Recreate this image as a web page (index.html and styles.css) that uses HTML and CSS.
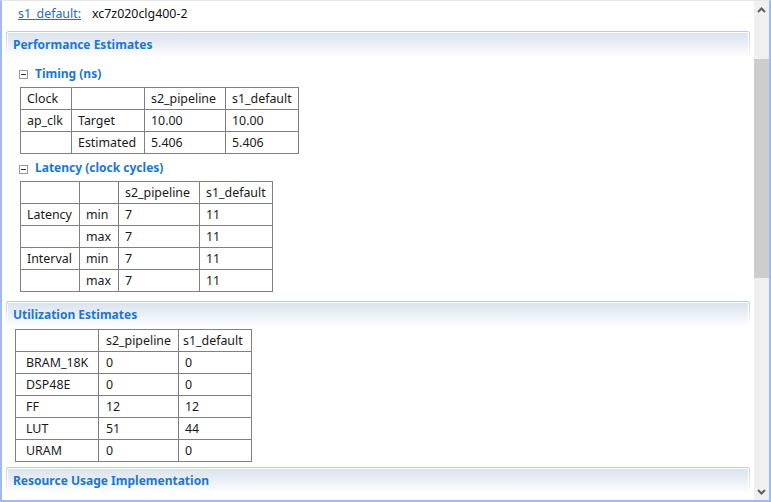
FILE: index.html
```html
<!DOCTYPE html>
<html>
<head>
<meta charset="utf-8">
<link rel="stylesheet" href="styles.css">
</head>
<body>
<div class="frame">
  <div class="content">
    <div class="part-row">
      <a class="link" href="#">s1_default:</a>
      <span class="part">xc7z020clg400-2</span>
    </div>

    <div class="section perf">
      <div class="section-head"><div class="section-head-inner">Performance Estimates</div></div>
      <div class="sub-head"><span class="toggle"></span><span class="sub-title">Timing (ns)</span></div>
      <table class="grid timing">
        <colgroup><col class="w51"><col class="w73"><col class="w81"><col class="w73"></colgroup>
        <tr><td>Clock</td><td></td><td>s2_pipeline</td><td>s1_default</td></tr>
        <tr><td>ap_clk</td><td>Target</td><td>10.00</td><td>10.00</td></tr>
        <tr><td></td><td>Estimated</td><td>5.406</td><td>5.406</td></tr>
      </table>
      <div class="sub-head short"><span class="toggle"></span><span class="sub-title">Latency (clock cycles)</span></div>
      <table class="grid latency">
        <colgroup><col class="w59"><col class="w39"><col class="w81"><col class="w73"></colgroup>
        <tr><td></td><td></td><td>s2_pipeline</td><td>s1_default</td></tr>
        <tr><td>Latency</td><td>min</td><td>7</td><td>11</td></tr>
        <tr><td></td><td>max</td><td>7</td><td>11</td></tr>
        <tr><td>Interval</td><td>min</td><td>7</td><td>11</td></tr>
        <tr><td></td><td>max</td><td>7</td><td>11</td></tr>
      </table>
    </div>

    <div class="section">
      <div class="section-head"><div class="section-head-inner">Utilization Estimates</div></div>
      <table class="grid util">
        <colgroup><col class="w83"><col class="w80"><col class="w73"></colgroup>
        <tr class="hdr"><td></td><td>s2_pipeline</td><td>s1_default</td></tr>
        <tr><td class="first">BRAM_18K</td><td>0</td><td>0</td></tr>
        <tr><td class="first">DSP48E</td><td>0</td><td>0</td></tr>
        <tr><td class="first">FF</td><td>12</td><td>12</td></tr>
        <tr><td class="first">LUT</td><td>51</td><td>44</td></tr>
        <tr><td class="first">URAM</td><td>0</td><td>0</td></tr>
      </table>
    </div>

    <div class="section last">
      <div class="section-head"><div class="section-head-inner">Resource Usage Implementation</div></div>
    </div>
  </div>
  <div class="scrollbar">
    <div class="sb-btn">
      <svg width="9" height="6" viewBox="0 0 9 6"><polyline points="1,5 4.5,1.5 8,5" fill="none" stroke="#606060" stroke-width="2"/></svg>
    </div>
    <div class="sb-track"><div class="sb-thumb"></div></div>
    <div class="sb-btn">
      <svg width="9" height="6" viewBox="0 0 9 6"><polyline points="1,1 4.5,4.5 8,1" fill="none" stroke="#606060" stroke-width="2"/></svg>
    </div>
  </div>
</div>
</body>
</html>
```

FILE: styles.css
```css
html, body {
  margin: 0;
  padding: 0;
  background: #fff;
}
body {
  width: 771px;
  height: 502px;
  overflow: hidden;
  font-family: "Noto Sans", "Open Sans", sans-serif;
  font-size: 12.4px;
  color: #1a1a1a;
}
.frame {
  box-sizing: border-box;
  width: 771px;
  height: 502px;
  display: flex;
  border-left: 2px solid #9dbbef;
  border-right: 2px solid #9dbbef;
  border-bottom: 2px solid #9dbbef;
  border-top: 1px solid #e6e6e6;
}
.content {
  flex: 1;
  overflow: hidden;
  padding: 0 4px 0 4px;
}
.part-row {
  height: 24px;
  display: flex;
  align-items: center;
  padding-left: 12px;
  gap: 11px;
}
.link {
  color: #2a6bbd;
  text-decoration: underline;
}
.part {
  color: #111;
}
.section {
  padding-top: 6px;
}
.perf {
  padding-bottom: 3px;
}
.last {
  padding-top: 5px;
}
.section-head {
  background: linear-gradient(#b8c9de, #ffffff 90%);
  padding: 1px 1px 0 1px;
  border-radius: 3px 3px 0 0;
  height: 28px;
  box-sizing: border-box;
}
.section-head-inner {
  height: 100%;
  box-sizing: border-box;
  border: 1px solid #fff;
  border-bottom: none;
  border-radius: 2px 2px 0 0;
  background: linear-gradient(#dae3ee, #ffffff 95%);
  padding-left: 5px;
  padding-top: 3px;
  font-weight: bold;
  color: #1c76d2;
  font-size: 12px;
}
.sub-head {
  display: flex;
  align-items: center;
  height: 28px;
  padding-left: 13px;
}
.sub-head.short {
  height: 27px;
}
.toggle {
  width: 7px;
  height: 7px;
  border: 1px solid #9a9a9a;
  position: relative;
  margin-right: 7px;
  margin-top: 3px;
}
.toggle::after {
  content: "";
  position: absolute;
  left: 1px;
  right: 1px;
  top: 3px;
  height: 1px;
  background: #333;
}
.sub-title {
  font-weight: bold;
  color: #1c76d2;
  font-size: 12px;
}
.grid {
  border-collapse: collapse;
  table-layout: fixed;
  margin-left: 14px;
}
.grid td {
  border: 1px solid #808080;
  height: 22px;
  padding: 0 0 0 6px;
  white-space: nowrap;
  box-sizing: border-box;
  line-height: 20px;
}
.util {
  margin-left: 9px;
}
.util .first {
  padding-left: 10px;
}
.util .hdr td {
  padding-left: 4px;
}
.util tr td:nth-child(2) {
  padding-left: 7px;
}
.w51 { width: 51px; }
.w73 { width: 73px; }
.w81 { width: 81px; }
.w59 { width: 59px; }
.w39 { width: 39px; }
.w83 { width: 83px; }
.w80 { width: 80px; }
.scrollbar {
  width: 15px;
  background: #f0f0f0;
  display: flex;
  flex-direction: column;
}
.sb-btn {
  height: 17px;
  display: flex;
  align-items: center;
  justify-content: center;
}
.sb-track {
  flex: 1;
}
.sb-thumb {
  margin-top: 41px;
  height: 219px;
  background: #cdcdcd;
}
```
